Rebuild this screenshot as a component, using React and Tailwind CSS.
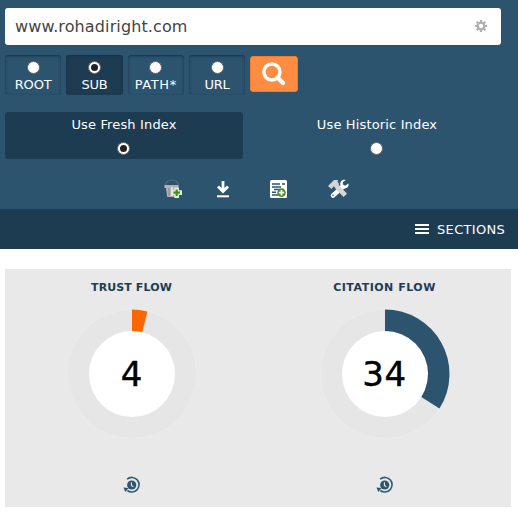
import React from "react";

const scopes = [
  { label: "ROOT", spacing: "tracking-[-0.1px]" },
  { label: "SUB", active: true, spacing: "tracking-[-0.2px]" },
  { label: "PATH*", spacing: "tracking-[0.6px]" },
  { label: "URL", spacing: "tracking-[-0.3px]" },
];

function Radio({ checked }) {
  return (
    <span className="flex h-[13px] w-[13px] shrink-0 items-center justify-center rounded-full border border-[#666] bg-white">
      {checked && <span className="h-[7px] w-[7px] rounded-full bg-[#222]" />}
    </span>
  );
}

function Gear() {
  return (
    <svg width="12" height="12" viewBox="0 0 12 12" fill="none" stroke="#b0b0b0">
      <circle cx="6" cy="6" r="3.300" strokeWidth="2.300" />
      <path d="M6 0v2M6 10v2M0 6h2M10 6h2M1.700 1.700l1.500 1.500M8.800 8.800l1.500 1.500M1.700 10.300l1.500-1.500M8.800 3.200l1.500-1.500" strokeWidth="2.200" />
    </svg>
  );
}

function BucketIcon() {
  return (
    <svg width="20" height="20" viewBox="0 0 20 20">
      <path d="M1.500 7C2 2.500 5 1 8 1s6 1.500 6.500 6" fill="none" stroke="#596b7b" strokeWidth="1.200" />
      <path d="M.5 6h14v3h-1l-.8 9H3.200L2 9H.5z" fill="#b6b0b2" />
      <path d="M5 9v8M11.500 9v8" stroke="#8b8287" />
      <path d="M8 8v9" stroke="#e7e2e4" strokeWidth="2" />
      <path d="M10.800 8.500h3.700q.5 0 .5.500v2.300h2.500q.5 0 .5.500v3.700q0 .5-.5.500H15v2.500q0 .5-.5.500h-3.700q-.5 0-.5-.5V16H8q-.5 0-.5-.5v-3.700q0-.5.500-.5h2.300V9q0-.5.500-.5z" fill="#e2eedb" />
      <path d="M12.700 10.400v6.600M9.400 13.700h6.600" stroke="#409218" strokeWidth="2.200" />
    </svg>
  );
}

function DownloadIcon() {
  return (
    <svg width="14" height="18" viewBox="0 0 14 18" fill="none" stroke="#fff">
      <path d="M7 1v10M2 6.500l5 5 5-5" strokeWidth="2.800" />
      <path d="M1 16.300h12" strokeWidth="2" />
    </svg>
  );
}

function ReportIcon() {
  return (
    <svg width="18" height="18" viewBox="0 0 18 18">
      <rect width="17" height="18" rx="1.500" fill="#fff" />
      <path d="M2 4h8M12 4h3M2 7h9M4 9.500h10M2 12.300h4M2 15h6" stroke="#31536c" strokeWidth="1.500" />
      <circle cx="11.500" cy="12.700" r="4.300" fill="#4b8b24" />
      <path d="M11.500 10v5.400M8.800 12.700h5.400" stroke="#fff" strokeWidth="1.700" />
    </svg>
  );
}

function ToolsIcon() {
  return (
    <svg width="22" height="20" viewBox="0 0 22 20" fill="none">
      <path d="M5 16.500L14.500 8" stroke="#fff" strokeWidth="4.600" strokeLinecap="round" />
      <path d="M20.300 4.500L17.200 6.800 14.800 5.700 15 2.900 17.800 1C14.200.1 11.800 2.500 12.300 5.800c.2 3.200 3 4.700 5.500 3.500C20.200 8.400 21.200 6.600 20.300 4.500z" fill="#fff" />
      <path d="M8.500 7L17.300 16.300" stroke="#d6d6d6" strokeWidth="4.800" />
      <path d="M0 7l6-6 4 .1-.4 1.700 1.500 2.200-3.800 3.800-1.600-1.600L3.500 10z" fill="#d5d3d3" />
      <circle cx="5" cy="16.300" r=".9" fill="#56758a" />
    </svg>
  );
}

function HistoryIcon() {
  return (
    <svg width="18" height="18" viewBox="0 0 18 18" fill="none">
      <path d="M4.100 3.100A7.300 7.300 0 1 1 4.300 14.500" stroke="#315b75" strokeWidth="1.600" />
      <path d="M.5 11.500l5 .5-3.200 4z" fill="#2d546f" />
      <circle cx="8.700" cy="9" r="4.600" fill="#2d546f" />
      <path d="M8.400 6.200v3.200l2 1.300" stroke="#e9e9e9" strokeWidth="1.100" />
    </svg>
  );
}

function Flow({ title, value, slice, color, spacing, digits }) {
  return (
    <section className="flex w-[253px] flex-col items-center">
      <h2 className={"mt-[11px] h-4 whitespace-nowrap text-[11px] leading-4 font-bold text-[#1f3d53] " + spacing}>
        {title}
      </h2>
      <div className="mt-3 grid h-[132px] w-[132px] place-items-center">
        <svg className="col-start-1 row-start-1" width="132" height="132" viewBox="-66 -66 132 132">
          <circle r="64.500" fill="#e6e6e6" stroke="#ececec" strokeWidth="0.700" />
          <path d={slice} fill={color} />
          <circle r="43" fill="#fff" />
        </svg>
        <span className={"z-10 col-start-1 row-start-1 text-[34px] leading-[40px] font-normal text-black [-webkit-text-stroke:0.4px_#000] " + digits}>
          {value}
        </span>
      </div>
      <div className="mt-[36px]"><HistoryIcon /></div>
    </section>
  );
}

export default function App() {
  return (
    <main className="h-[514px] w-[518px] overflow-hidden bg-white font-['DejaVu_Sans',sans-serif]">
      <header className="h-[209px] bg-[#2d546f] pt-2 pl-[5px] text-white">
        <div className="flex h-[37px] w-[496px] items-center justify-between rounded-[3px] bg-white pr-[14px] pl-[10px]">
          <span className="mt-px text-[16px] leading-5 tracking-[0.12px] text-[#444]">www.rohadiright.com</span>
          <span className="-mt-px"><Gear /></span>
        </div>

        <div className="mt-[10px] flex h-10 gap-[5px]">
          {scopes.map(({ label, active, spacing }) => (
            <div
              key={label}
              className={
                "flex w-[56.300px] flex-col items-center rounded-[3px] pt-[6px] shadow-[inset_0_1px_3px_#173247] " +
                (active ? "bg-[#1d3b51]" : "bg-[#2d546f]")
              }
            >
              <Radio checked={active} />
              <span className={"mt-[3px] text-[13px] leading-4 " + spacing}>{label}</span>
            </div>
          ))}
          <div className="mt-px flex h-9 w-12 items-center justify-center rounded-[3px] border border-[#f47b29] bg-[#ff8c40]">
            <svg width="24" height="24" viewBox="0 0 24 24" fill="none" stroke="#fff">
              <circle cx="9.900" cy="10" r="8" strokeWidth="3.500" />
              <path d="M15.500 15.500l5.500 5.500" strokeWidth="4.200" strokeLinecap="round" />
            </svg>
          </div>
        </div>

        <div className="mt-[17px] flex h-[47px] gap-[15px]">
          <div className="flex w-[238px] flex-col items-center rounded-[3px] bg-[#1d3b51] pt-[5px]">
            <span className="text-[13px] leading-4 tracking-[0.150px]">Use Fresh Index</span>
            <span className="mt-[9px] mr-[2px]"><Radio checked /></span>
          </div>
          <div className="flex w-[238px] flex-col items-center pt-[5px]">
            <span className="text-[13px] leading-4 tracking-[0.150px]">Use Historic Index</span>
            <span className="mt-[9px] mr-[2px]"><Radio /></span>
          </div>
        </div>

        <div className="mt-[20px] ml-[159px] flex h-5 items-center">
          <BucketIcon />
          <span className="ml-[32px]"><DownloadIcon /></span>
          <span className="ml-[40px]"><ReportIcon /></span>
          <span className="ml-[40px]"><ToolsIcon /></span>
        </div>
      </header>

      <nav className="flex h-10 items-center justify-end gap-[8px] bg-[#1d3b51] pr-[13px] text-white">
        <svg width="14" height="12" viewBox="0 0 14 12">
          <path d="M0 2h14M0 6h14M0 10h14" stroke="#fff" strokeWidth="2" />
        </svg>
        <span className="mt-px text-[13px] leading-4 tracking-[0.300px]">SECTIONS</span>
      </nav>

      <div className="mt-5 ml-[5px] flex h-[238px] w-[506px] bg-[#e9e9e9]">
        <Flow
          title="TRUST FLOW"
          value="4"
          color="#ff6600"
          slice="M0 0V-64.500A64.500 64.500 0 0 1 15.400 -62.600Z"
          spacing="tracking-[0.100px]"
          digits=""
        />
        <Flow
          title="CITATION FLOW"
          value="34"
          color="#2d546f"
          slice="M0 0V-64.500A64.500 64.500 0 0 1 54.460 34.560Z"
          spacing="tracking-[0.500px]"
          digits="tracking-[0.5px]"
        />
      </div>
    </main>
  );
}
